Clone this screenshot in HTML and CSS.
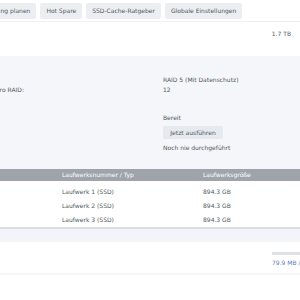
FILE: index.html
```html
<!DOCTYPE html>
<html lang="de">
<head>
  <meta charset="UTF-8" />
  <title>Speicherpool</title>
  <link rel="stylesheet" href="styles.css">
</head>
<body>
  <div class="page">
    <div class="toolbar">
      <button type="button" class="tool-btn">Datenbereinigung planen</button>
      <button type="button" class="tool-btn">Hot Spare</button>
      <button type="button" class="tool-btn">SSD-Cache-Ratgeber</button>
      <button type="button" class="tool-btn">Globale Einstellungen</button>
    </div>

    <div class="summary">
      <span class="size">1.7 TB</span>
    </div>

    <div class="details">
      <div class="row">
        <span class="label">RAID-Typ:</span>
        <span class="value">RAID 5 (Mit Datenschutz)</span>
      </div>
      <div class="row">
        <span class="label">Anzahl der Laufwerke pro RAID:</span>
        <span class="value">12</span>
      </div>
      <div class="row spaced">
        <span class="label">Datenbereinigung:</span>
        <span class="value">Bereit</span>
      </div>
      <div class="row">
        <span class="label"></span>
        <span class="value"><button type="button" class="run-btn">Jetzt ausführen</button></span>
      </div>
      <div class="row">
        <span class="label">Letzte Bereinigung:</span>
        <span class="value">Noch nie durchgeführt</span>
      </div>
    </div>

    <div class="drives">
      <div class="drives-head">
        <span class="col-num">Laufwerksnummer / Typ</span>
        <span class="col-size">Laufwerksgröße</span>
      </div>
      <div class="drive-row">
        <span class="col-num">Laufwerk 1 (SSD)</span>
        <span class="col-size">894.3 GB</span>
      </div>
      <div class="drive-row">
        <span class="col-num">Laufwerk 2 (SSD)</span>
        <span class="col-size">894.3 GB</span>
      </div>
      <div class="drive-row">
        <span class="col-num">Laufwerk 3 (SSD)</span>
        <span class="col-size">894.3 GB</span>
      </div>
    </div>

    <div class="band"></div>

    <div class="usage">
      <div class="usage-bar"></div>
      <span class="usage-text">79.9 MB / 1.7 TB</span>
    </div>
  </div>
</body>
</html>
```

FILE: styles.css
```css
body {
  margin: 0;
  font-family: 'DejaVu Sans', Verdana, sans-serif;
  font-size: 6px;
  color: #515960;
  background-color: #fff;
  overflow: hidden;
}

/* page is scrolled sideways, so the left part is hidden */
.page {
  width: 371px;
  margin-left: -71px;
}

.toolbar {
  display: flex;
  gap: 4px;
  height: 22px;
  align-items: center;
  padding-left: 19px;
  border-bottom: 1px solid #eef0f2;
  box-sizing: border-box;
}

.tool-btn {
  font-family: inherit;
  font-size: 6px;
  color: #515960;
  background-color: #eceef1;
  border: none;
  border-radius: 2px;
  height: 16px;
  padding: 0 6px;
}

.summary {
  display: flex;
  justify-content: flex-end;
  height: 34px;
  padding: 8px 9px 0 0;
  box-sizing: border-box;
}

.details {
  background-color: #f4f6f9;
  padding: 19px 0 0;
  height: 113px;
  box-sizing: border-box;
}

.row {
  display: grid;
  grid-template-columns: 234px 1fr;
  line-height: 10px;
}

.row.spaced {
  margin-top: 18px;
}

.run-btn {
  font-family: inherit;
  font-size: 6px;
  color: #515960;
  background-color: #e6e9ed;
  border: none;
  border-radius: 2px;
  height: 13px;
  width: 60px;
  padding: 0;
  margin: 3px 0 4px;
}

.drives-head,
.drive-row {
  display: grid;
  grid-template-columns: 141px 1fr;
  padding-left: 133px;
}

.drives-head {
  height: 12px;
  line-height: 12px;
  background-color: #9fa4aa;
  color: #fff;
}

.drives-head + .drive-row {
  margin-top: 4px;
}

.drive-row {
  height: 14px;
  line-height: 14px;
}

.drive-row:last-child {
  border-bottom: 2px solid #dcdee1;
}

.band {
  height: 11px;
  background-color: #f3f4f9;
  border-bottom: 2px solid #f4f5f7;
}

.usage {
  height: 33px;
  padding: 10px 0 0 343px;
  box-sizing: border-box;
  border-bottom: 2px solid #f4f5f7;
}

.usage-bar {
  height: 3px;
  background-color: #dfe1e4;
}

.usage-text {
  display: block;
  margin-top: 4px;
  color: #5b7fae;
  white-space: nowrap;
}
```
